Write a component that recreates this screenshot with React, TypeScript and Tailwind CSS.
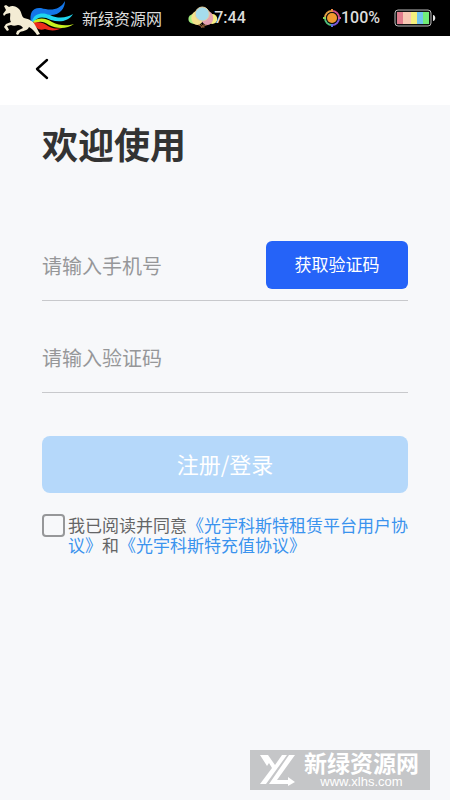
import { useState } from "react";

const HorseLogo = () => (
  <svg width="76" height="36" viewBox="0 0 76 36" aria-hidden="true">
    <path
      d="M31 23C29 12 33 7 41 8C51 11 60 10 65 1C65 9 59 16 49 15C41 13 35 15 33 22Z"
      fill="#1476e8"
    />
    <path
      d="M32 21C34 13 43 12 50 15C58 19 67 18 73 14C69 21 60 23 51 20C43 16 37 17 34 22Z"
      fill="#1fd5f0"
    />
    <path
      d="M33 22C38 17 46 18 52 22C59 26 68 26 74 24C67 29 57 29 49 25C43 21 38 21 35 24Z"
      fill="#c8f020"
    />
    <path
      d="M32 23C39 21 44 23 48 26C53 29 58 29 62 28C57 31 50 31 45 29C42 30 39 30 37 28Z"
      fill="#ee2a1c"
    />
    <path
      d="M4 6L6 5L9 7C12 5 16 6 19 9C22 12 21 16 24 18C29 19 33 21 35 25C37 28 38 31 40 34L37 35C35 32 33 29 29 27C28 30 24 31 20 32L18 35L16 34L17 31L23 28C22 26 20 25 18 25C15 26 13 26 11 25L7 26L9 30L7 31L4 27L6 24L11 22C9 19 11 15 10 13L6 14L4 16L3 14L6 10Z"
      fill="#f3ecd4"
    />
  </svg>
);

const Balloons = () => (
  <svg width="30" height="24" viewBox="0 0 30 24" aria-hidden="true">
    <path d="M5 16L14 21L25 16M10 17L14 21L19 17" stroke="#8a5a35" fill="none" />
    <ellipse cx="6" cy="13" rx="6" ry="5" fill="#a5ee80" />
    <ellipse cx="24" cy="13" rx="5" ry="5" fill="#f6ee83" />
    <ellipse cx="9" cy="12" rx="6" ry="7" fill="#f4e18c" />
    <ellipse cx="19" cy="12" rx="6" ry="7" fill="#e4a0b0" />
    <circle cx="14" cy="8" r="7" fill="#a5dcec" stroke="#e7cf9c" />
    <path d="M13 18L16 22M16 18L13 22" stroke="#8a5a35" strokeWidth="1" />
  </svg>
);

const SunIcon = () => (
  <svg width="18" height="18" viewBox="0 0 18 18" fill="none" aria-hidden="true">
    <path d="M2 9A7 7 0 0 1 9 2" stroke="#e3a044" strokeWidth="2" />
    <path d="M9 2A7 7 0 0 1 16 9" stroke="#d2508c" strokeWidth="2" />
    <path d="M16 9A7 7 0 0 1 9 16" stroke="#7a56d8" strokeWidth="2" />
    <path d="M9 16A7 7 0 0 1 2 9" stroke="#51bf7b" strokeWidth="2" />
    <path d="M9 0V3" stroke="#ee8844" strokeWidth="2" />
    <path d="M18 9H15" stroke="#cf55a0" strokeWidth="2" />
    <path d="M9 18V15" stroke="#5f73e0" strokeWidth="2" />
    <path d="M0 9H3" stroke="#8bd35c" strokeWidth="2" />
    <circle cx="9" cy="9" r="6" fill="#111" />
    <circle cx="9" cy="9" r="5" fill="#f19a2e" />
  </svg>
);

const BatteryIcon = () => (
  <svg width="42" height="18" viewBox="0 0 42 18" aria-hidden="true">
    <rect x="1" y="1" width="36" height="16" rx="3" fill="#111" stroke="#b9b9b9" />
    <rect x="3" y="3" width="6" height="12" fill="#e17c8c" />
    <rect x="9" y="3" width="8" height="12" fill="#f8c9b4" />
    <rect x="17" y="3" width="6" height="12" fill="#f5f07c" />
    <rect x="23" y="3" width="6" height="12" fill="#70c5ef" />
    <rect x="29" y="3" width="6" height="12" fill="#72ee78" />
    <path d="M39 6C42 6 42 12 39 12Z" fill="#e8e8e8" />
  </svg>
);

function StatusBar() {
  return (
    <div className="relative flex h-9 items-center justify-between bg-black pr-3.5 text-base text-[#dcdcdc]">
      <div className="flex items-center gap-1.5">
        <HorseLogo />
        <span>新绿资源网</span>
      </div>
      <div className="absolute left-1/2 flex -translate-x-1/2 items-center pr-4 font-['Roboto'] font-medium">
        <Balloons />
        <span className="-ml-1">7:44</span>
      </div>
      <div className="flex items-center font-['Roboto'] font-medium">
        <SunIcon />
        <span className="mr-3.5">100%</span>
        <BatteryIcon />
      </div>
    </div>
  );
}

function Watermark() {
  return (
    <div className="fixed right-5 bottom-2.5 flex h-10 w-[180px] items-center gap-2 bg-[#c5c6c8] pl-2.5 text-white">
      <svg width="36" height="32" viewBox="0 0 36 32" aria-hidden="true">
        <path
          d="M0 1H8L15 11L22 1H27L6 30H0L12 14L9 9L7 12Z M29 1H35L17 26H28V23L35 28L28 32V30H9Z"
          fill="#fff"
        />
      </svg>
      <div className="flex flex-col items-center font-['Liberation_Sans','Noto_Sans_CJK_SC',sans-serif]">
        <span className="text-[23px] leading-6 font-bold">新绿资源网</span>
        <span className="text-[13px] leading-3">www.xlhs.com</span>
      </div>
    </div>
  );
}

export default function App() {
  const [phone, setPhone] = useState("");
  const [code, setCode] = useState("");
  const [agreed, setAgreed] = useState(false);

  return (
    <div className="min-h-screen bg-[#f7f8fa] font-['Noto_Sans_CJK_SC',sans-serif]">
      <StatusBar />

      <header className="flex h-[69px] items-center bg-white px-8 pb-1">
        <button type="button" aria-label="返回" className="p-0.5">
          <svg width="16" height="24" viewBox="0 0 16 24" fill="none">
            <path
              d="M13 3L3 12L13 21"
              stroke="#000"
              strokeWidth="2.4"
              strokeLinecap="round"
              strokeLinejoin="round"
            />
          </svg>
        </button>
      </header>

      <form
        className="px-[42px] pt-3.5"
        onSubmit={(e) => e.preventDefault()}
      >
        <h1 className="text-4xl leading-[48px] font-bold text-[#333]">
          欢迎使用
        </h1>

        {/* Phone number */}
        <div className="mt-[74px] flex h-[60px] items-start justify-between border-b border-[#c8c9cc]">
          <input
            type="tel"
            aria-label="手机号"
            placeholder="请输入手机号"
            value={phone}
            onChange={(e) => setPhone(e.target.value)}
            className="h-12 min-w-0 flex-1 bg-transparent text-xl outline-none placeholder:text-[#969799]"
          />
          <button
            type="button"
            className="h-12 w-[142px] rounded-md bg-[#2563f8] pb-0.5 text-[17px] text-white"
          >
            获取验证码
          </button>
        </div>

        {/* Verification code */}
        <div className="mt-8 flex h-[60px] items-start border-b border-[#c8c9cc]">
          <input
            type="text"
            aria-label="验证码"
            placeholder="请输入验证码"
            value={code}
            onChange={(e) => setCode(e.target.value)}
            className="h-12 w-full bg-transparent text-xl outline-none placeholder:text-[#969799]"
          />
        </div>

        <button
          type="submit"
          className="mt-[43px] h-[57px] w-full rounded-lg bg-[#b5d8fa] pb-0.5 text-[22px] text-white"
        >
          注册/登录
        </button>

        <div className="mt-[21px] flex items-start gap-[3px] font-['Liberation_Sans','Noto_Sans_CJK_SC',sans-serif] text-[17px] leading-5 text-[#646566]">
          <input
            id="agree"
            type="checkbox"
            checked={agreed}
            onChange={(e) => setAgreed(e.target.checked)}
            className="size-[23px] shrink-0 appearance-none rounded border-2 border-[#969799] checked:bg-[#2563f8]"
          />
          <p className="mt-[3px]">
            <label htmlFor="agree">我已阅读并同意</label>
            <a href="#user" className="text-[#3a93ee]">
              《光宇科斯特租赁平台用户协议》
            </a>
            和
            <a href="#recharge" className="text-[#3a93ee]">
              《光宇科斯特充值协议》
            </a>
          </p>
        </div>
      </form>

      <Watermark />
    </div>
  );
}
